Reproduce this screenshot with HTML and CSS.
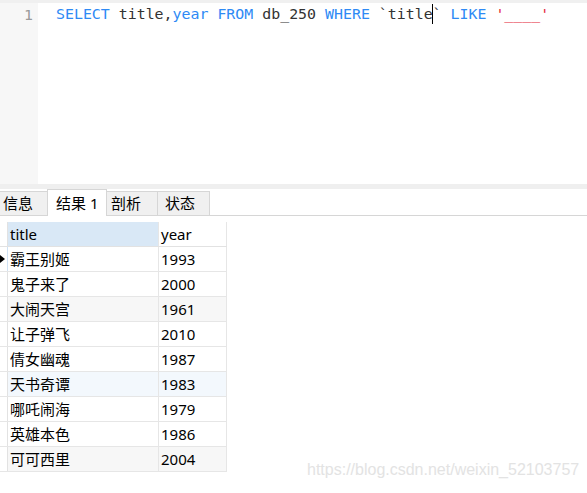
FILE: index.html
```html
<!DOCTYPE html>
<html>
<head>
<meta charset="utf-8">
<link rel="stylesheet" href="styles.css">
</head>
<body>
<div class="topband"></div>
<div class="editor">
  <div class="gutter"><span class="lineno">1</span></div>
  <div class="code"><span class="kw">SELECT</span> title,<span class="kw">year</span> <span class="kw">FROM</span> db_250 <span class="kw">WHERE</span> `title<span class="caret"></span>` <span class="kw">LIKE</span> <span class="str">'____'</span></div>
</div>
<div class="sep"></div>
<div class="tabs">
  <div class="tab tab-info">信息</div>
  <div class="tab tab-active">结果 1</div>
  <div class="tab tab-profile">剖析</div>
  <div class="tab tab-status">状态</div>
  <div class="tab-fill"></div>
</div>
<div class="grid">
  <div class="row head">
    <div class="sel"></div>
    <div class="cell title-h">title</div>
    <div class="cell">year</div>
  </div>
  <div class="row current">
    <div class="sel"><span class="arrow"></span></div>
    <div class="cell">霸王别姬</div>
    <div class="cell">1993</div>
  </div>
  <div class="row">
    <div class="sel"></div>
    <div class="cell">鬼子来了</div>
    <div class="cell">2000</div>
  </div>
  <div class="row alt">
    <div class="sel"></div>
    <div class="cell">大闹天宫</div>
    <div class="cell">1961</div>
  </div>
  <div class="row">
    <div class="sel"></div>
    <div class="cell">让子弹飞</div>
    <div class="cell">2010</div>
  </div>
  <div class="row">
    <div class="sel"></div>
    <div class="cell">倩女幽魂</div>
    <div class="cell">1987</div>
  </div>
  <div class="row hover">
    <div class="sel"></div>
    <div class="cell">天书奇谭</div>
    <div class="cell">1983</div>
  </div>
  <div class="row">
    <div class="sel"></div>
    <div class="cell">哪吒闹海</div>
    <div class="cell">1979</div>
  </div>
  <div class="row">
    <div class="sel"></div>
    <div class="cell">英雄本色</div>
    <div class="cell">1986</div>
  </div>
  <div class="row alt">
    <div class="sel"></div>
    <div class="cell">可可西里</div>
    <div class="cell">2004</div>
  </div>
</div>
<div class="watermark">https://blog.csdn.net/weixin_52103757</div>
</body>
</html>
```
FILE: styles.css
```css
html, body {
  margin: 0;
  padding: 0;
  background: #ffffff;
}
body {
  width: 587px;
  height: 493px;
  overflow: hidden;
  position: relative;
  font-family: "Noto Sans", "Noto Sans CJK SC", sans-serif;
}
.topband {
  height: 3px;
  background: #f0f0f0;
}
.editor {
  display: flex;
  height: 181px;
}
.gutter {
  width: 38px;
  background: #f7f7f7;
  box-sizing: border-box;
  padding-right: 5px;
  text-align: right;
}
.lineno, .code {
  font-family: "DejaVu Sans Mono", monospace;
  font-size: 14.9px;
  line-height: 22px;
}
.lineno {
  color: #9a9a9a;
}
.code {
  padding-left: 18px;
  color: #333333;
  white-space: pre;
}
.kw {
  color: #2e8af5;
}
.str {
  color: #e5283a;
}
.caret {
  display: inline-block;
  width: 0;
  height: 20px;
  border-left: 1px solid #000;
  vertical-align: -5px;
  margin-left: -1px;
}
.sep {
  height: 5px;
  background: #efefef;
}
.tabs {
  display: flex;
  align-items: flex-end;
  height: 27px;
  font-size: 15px;
  color: #000;
}
.tab {
  box-sizing: border-box;
  height: 25px;
  line-height: 23px;
  background: #f0f0f0;
  border: 1px solid #d6d6d6;
  border-left: none;
  white-space: nowrap;
}
.tab-info {
  width: 48px;
  padding-left: 3px;
}
.tab-active {
  height: 27px;
  line-height: 26px;
  width: 60px;
  padding-left: 8px;
  background: #ffffff;
  border-bottom: none;
  border-left: 1px solid #d6d6d6;
  margin-left: -1px;
}
.tab-profile {
  width: 51px;
  padding-left: 4px;
}
.tab-status {
  width: 52px;
  padding-left: 7px;
}
.tab-fill {
  flex: 1;
  border-bottom: 1px solid #d6d6d6;
}
.grid {
  margin-top: 6px;
  font-size: 15px;
  color: #000;
}
.row {
  display: grid;
  grid-template-columns: 8px 151px 68px;
  height: 25px;
  box-sizing: border-box;
  border-bottom: 1px solid #e6e6e6;
  width: 227px;
}
.row.head {
  border-bottom: 1px solid #e2e2e2;
}
.sel {
  border-right: 1px solid #e2e2e2;
  position: relative;
}
.cell {
  border-right: 1px solid #e6e6e6;
  padding-left: 2px;
  line-height: 24px;
  white-space: nowrap;
}
.title-h {
  background: #d9e8f6;
}
.row.current .sel {
  border-right-color: #d0e2f4;
}
.arrow {
  position: absolute;
  left: 0;
  top: 8px;
  width: 0;
  height: 0;
  border-top: 4px solid transparent;
  border-bottom: 4px solid transparent;
  border-left: 5px solid #000;
}
.row.alt .cell {
  background: #f7f7f7;
}
.row.hover .cell {
  background: #f3f8fd;
}
.watermark {
  position: absolute;
  left: 307px;
  top: 461px;
  font-family: "Liberation Sans", Arial, sans-serif;
  font-size: 16px;
  color: #e3e3e3;
  white-space: nowrap;
}
```
